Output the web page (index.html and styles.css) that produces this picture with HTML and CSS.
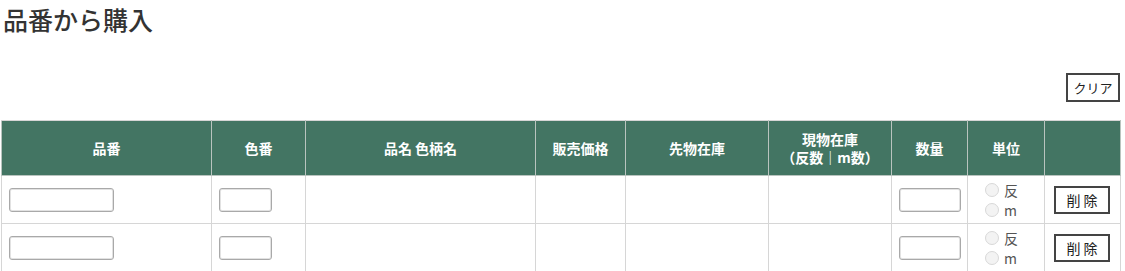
FILE: index.html
```html
<!DOCTYPE html>
<html lang="ja">
<head>
    <meta charset="UTF-8">
    <meta name="viewport" content="width=device-width, initial-scale=1.0">
    <title>品番から購入</title>
    <link rel="stylesheet" href="styles.css">
</head>
<body>
    <div class="page">
        <h1>品番から購入</h1>
        <div class="toolbar">
            <button class="btn" id="clear-button">クリア</button>
        </div>
        <table class="order-table">
            <colgroup>
                <col style="width:210px">
                <col style="width:94px">
                <col style="width:230px">
                <col style="width:90px">
                <col style="width:143px">
                <col style="width:123px">
                <col style="width:76px">
                <col style="width:77px">
                <col style="width:76px">
            </colgroup>
            <thead>
                <tr>
                    <th>品番</th>
                    <th>色番</th>
                    <th>品名 色柄名</th>
                    <th>販売価格</th>
                    <th>先物在庫</th>
                    <th>現物在庫<br>（反数｜m数）</th>
                    <th>数量</th>
                    <th>単位</th>
                    <th></th>
                </tr>
            </thead>
            <tbody>
                <tr>
                    <td class="left"><input type="text" class="input-code"></td>
                    <td class="left"><input type="text" class="input-color"></td>
                    <td></td>
                    <td></td>
                    <td></td>
                    <td></td>
                    <td class="left"><input type="text" class="input-qty"></td>
                    <td class="unit">
                        <label><input type="radio" name="unit1">反</label>
                        <label><input type="radio" name="unit1">m</label>
                    </td>
                    <td class="action"><button class="btn btn-delete">削除</button></td>
                </tr>
                <tr>
                    <td class="left"><input type="text" class="input-code"></td>
                    <td class="left"><input type="text" class="input-color"></td>
                    <td></td>
                    <td></td>
                    <td></td>
                    <td></td>
                    <td class="left"><input type="text" class="input-qty"></td>
                    <td class="unit">
                        <label><input type="radio" name="unit2">反</label>
                        <label><input type="radio" name="unit2">m</label>
                    </td>
                    <td class="action"><button class="btn btn-delete">削除</button></td>
                </tr>
            </tbody>
        </table>
    </div>
</body>
</html>
```

FILE: styles.css
```css
body {
    margin: 0;
    font-family: "Noto Sans CJK JP", "Noto Sans", sans-serif;
    color: #333;
    background-color: #fff;
}
.page {
    padding: 0 5px 0 1px;
}
h1 {
    margin: 0;
    padding: 1px 0 0 2px;
    font-size: 25px;
    line-height: 36px;
    font-weight: 500;
    color: #333;
}
.toolbar {
    display: flex;
    justify-content: flex-end;
    margin-top: 36px;
    margin-bottom: 18px;
}
.btn {
    font-family: "Noto Sans CJK JP", sans-serif;
    font-size: 13px;
    color: #222;
    background-color: #fff;
    border: 2px solid #444;
    border-radius: 0;
    padding: 0;
    cursor: pointer;
}
#clear-button {
    width: 54px;
    height: 29px;
}
.order-table {
    width: 1119px;
    table-layout: fixed;
    border-collapse: collapse;
    border: 1px solid #d6d6d6;
}
.order-table th {
    background-color: #437563;
    color: #fff;
    font-size: 14px;
    font-weight: bold;
    line-height: 18px;
    height: 54px;
    padding: 0;
    border: 1px solid #b9c4bf;
    border-top-color: #d6d6d6;
    text-align: center;
    vertical-align: middle;
}
.order-table td {
    height: 47px;
    padding: 0;
    border: 1px solid #d6d6d6;
    vertical-align: middle;
}
.order-table td.left {
    padding-left: 7px;
}
input[type="text"] {
    display: block;
    box-sizing: border-box;
    height: 24px;
    border: 1px solid #a9a9a9;
    border-radius: 3px;
    box-shadow: inset 0 0 0 1px #e2e2e2;
    padding: 0 4px;
    margin: 0;
}
.input-code {
    width: 105px;
}
.input-color {
    width: 53px;
}
.input-qty {
    width: 62px;
}
.unit {
    padding-left: 17px !important;
}
.unit label {
    display: flex;
    align-items: center;
    font-size: 14px;
    line-height: 20px;
    color: #555;
}
.unit input[type="radio"] {
    appearance: none;
    -webkit-appearance: none;
    width: 14px;
    height: 14px;
    margin: 0 5px 0 0;
    border: 1px solid #d8d8d8;
    border-radius: 50%;
    background-color: #f3f3f3;
}
.action {
    padding-left: 9px !important;
}
.btn-delete {
    width: 56px;
    height: 28px;
    font-size: 14px;
    letter-spacing: 3px;
    padding-left: 3px;
}
```
